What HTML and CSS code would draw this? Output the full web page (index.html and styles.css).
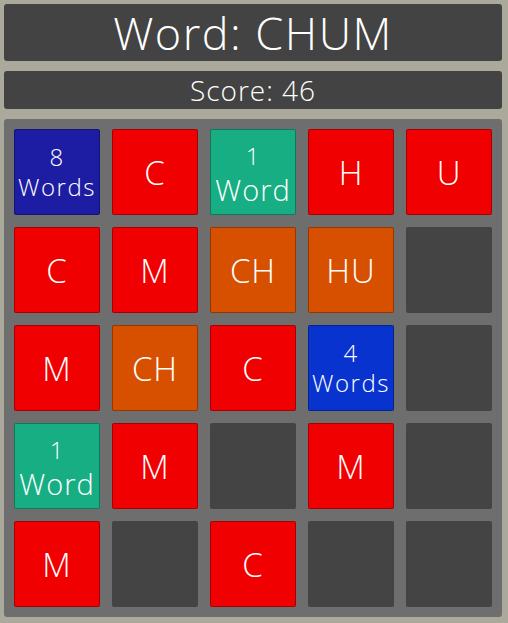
FILE: index.html
```html
<!DOCTYPE html>
<html>
<head>
<meta charset="utf-8">
<link rel="stylesheet" href="styles.css">
</head>
<body>
<div class="word">Word: CHUM</div>
<div class="score">Score: 46</div>
<div class="board">
  <div class="tile navy count"><span>8</span><span>Words</span></div>
  <div class="tile red">C</div>
  <div class="tile green count one"><span>1</span><span>Word</span></div>
  <div class="tile red">H</div>
  <div class="tile red">U</div>

  <div class="tile red">C</div>
  <div class="tile red">M</div>
  <div class="tile orange">CH</div>
  <div class="tile orange">HU</div>
  <div class="tile empty"></div>

  <div class="tile red">M</div>
  <div class="tile orange">CH</div>
  <div class="tile red">C</div>
  <div class="tile blue count"><span>4</span><span>Words</span></div>
  <div class="tile empty"></div>

  <div class="tile green count one"><span>1</span><span>Word</span></div>
  <div class="tile red">M</div>
  <div class="tile empty"></div>
  <div class="tile red">M</div>
  <div class="tile empty"></div>

  <div class="tile red">M</div>
  <div class="tile empty"></div>
  <div class="tile red">C</div>
  <div class="tile empty"></div>
  <div class="tile empty"></div>
</div>
</body>
</html>
```
FILE: styles.css
```css
html, body {
  margin: 0;
  padding: 0;
}
body {
  background: #aaa99b;
  padding: 4px 6px 0 4px;
  font-family: "Open Sans", "Lato", sans-serif;
  font-weight: 300;
  color: #fff;
  width: 498px;
}
.word {
  height: 57px;
  background: #434343;
  border-radius: 3px;
  display: flex;
  align-items: center;
  justify-content: center;
  font-size: 45px;
  margin-bottom: 10px;
  letter-spacing: 1.5px;
}
.score {
  height: 38px;
  background: #434343;
  border-radius: 3px;
  display: flex;
  align-items: center;
  justify-content: center;
  font-size: 28px;
  letter-spacing: 1px;
  margin-bottom: 10px;
}
.board {
  background: #6e6e6e;
  border-radius: 3px;
  padding: 10px;
  display: grid;
  grid-template-columns: repeat(5, 86px);
  grid-auto-rows: 86px;
  gap: 12px;
}
.tile {
  box-sizing: border-box;
  display: flex;
  flex-direction: column;
  align-items: center;
  justify-content: center;
  font-size: 33px;
  letter-spacing: 1px;
  border-radius: 2px;
  border: 1px solid rgba(0,0,0,0.3);
}
.tile.count {
  font-size: 24px;
  line-height: 30px;
  letter-spacing: 1.5px;
}
.tile.count.one {
  font-size: 29px;
  line-height: 34px;
  letter-spacing: 1px;
  padding-top: 2px;
}
.tile.count.one span:first-child {
  font-size: 24px;
}
.red { background: #f00000; }
.orange { background: #d75000; }
.green { background: #17ae84; }
.navy { background: #1d1da3; }
.blue { background: #0833cf; }
.empty { background: #444444; border: none; }
```
